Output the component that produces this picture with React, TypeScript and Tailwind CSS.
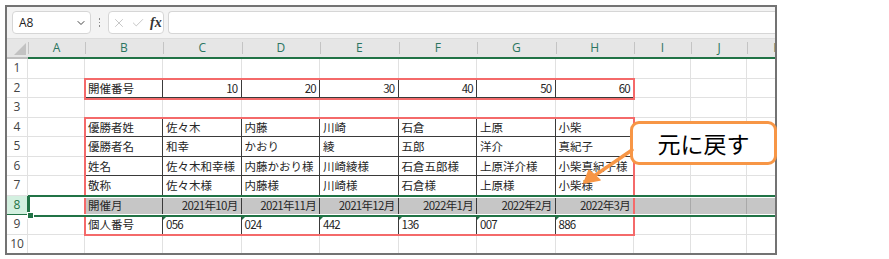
import { ChevronDown, X, Check } from "lucide-react";

type Cell = { t: string; align?: "l" | "r"; flag?: boolean };

const COLS = ["A", "B", "C", "D", "E", "F", "G", "H", "I", "J", "K"];

const l = (t: string): Cell => ({ t, align: "l" });
const r = (t: string): Cell => ({ t, align: "r" });
const f = (t: string): Cell => ({ t, align: "l", flag: true });

// rows 1..10, columns A..K
const ROWS: Record<number, Cell[]> = {
  2: [l(""), l("開催番号"), r("10"), r("20"), r("30"), r("40"), r("50"), r("60")],
  4: [l(""), l("優勝者姓"), l("佐々木"), l("内藤"), l("川崎"), l("石倉"), l("上原"), l("小柴")],
  5: [l(""), l("優勝者名"), l("和幸"), l("かおり"), l("綾"), l("五郎"), l("洋介"), l("真紀子")],
  6: [l(""), l("姓名"), l("佐々木和幸様"), l("内藤かおり様"), l("川崎綾様"), l("石倉五郎様"), l("上原洋介様"), l("小柴真紀子様")],
  7: [l(""), l("敬称"), l("佐々木様"), l("内藤様"), l("川崎様"), l("石倉様"), l("上原様"), l("小柴様")],
  8: [l(""), l("開催月"), r("2021年10月"), r("2021年11月"), r("2021年12月"), r("2022年1月"), r("2022年2月"), r("2022年3月")],
  9: [l(""), l("個人番号"), f("056"), f("024"), f("442"), f("136"), f("007"), f("886")],
};

const TABLE_ROWS = [2, 4, 5, 6, 7, 8, 9];

function GridCell({ row, col }: { row: number; col: number }) {
  const cell = ROWS[row]?.[col];
  const inTable = TABLE_ROWS.includes(row) && col >= 1 && col <= 7;
  const selected = row === 8 && col >= 1;
  const border = inTable
    ? "border-[#3a3a3a]"
    : selected
      ? "border-[#a9a9a9]"
      : "border-[#e1e1e1]";
  const numeric = cell && /^[0-9]/.test(cell.t);

  return (
    <div
      className={`relative flex h-[19.5px] items-center overflow-visible whitespace-nowrap border-r border-b px-[3px] pt-[1px] text-[11.5px] leading-none text-[#262626] ${border} ${
        selected ? "bg-[#c6c6c6]" : "bg-white"
      } ${cell?.align === "r" ? "justify-end" : "justify-start"} ${
        numeric ? "tracking-[-0.7px]" : ""
      }`}
    >
      {cell?.flag && (
        <span className="absolute top-0 left-0 h-0 w-0 border-t-[5px] border-r-[5px] border-t-[#1e7145] border-r-transparent" />
      )}
      {cell?.t}
    </div>
  );
}

export default function App() {
  const rows = Array.from({ length: 10 }, (_, i) => i + 1);

  return (
    <div
      className="relative h-[259px] w-[889px] overflow-hidden bg-white"
      style={{ fontFamily: '"Noto Sans CJK JP", "Noto Sans", sans-serif' }}
    >
      <div className="ml-[5px] pt-[5px]">
        <div className="relative h-[250px] w-[772px] overflow-hidden border-2 border-[#737373]">
          {/* formula bar */}
          <div className="flex h-[32px] items-start border-b border-[#dcdcdc] bg-[#f3f3f3] pt-[4px] pl-[5px]">
            <div className="flex h-[23px] w-[79px] items-center justify-between rounded-[4px] border border-[#d6d6d6] bg-white pr-[3px] pl-[6px]">
              <span className="font-['Open_Sans',sans-serif] text-[12px] text-[#222]">A8</span>
              <ChevronDown className="h-[12px] w-[12px] text-[#444]" strokeWidth={2} />
            </div>
            <div className="flex h-[23px] w-[17px] items-center justify-center">
              <span className="flex flex-col gap-[2px]">
                <span className="h-[1.5px] w-[1.5px] bg-[#8a8a8a]" />
                <span className="h-[1.5px] w-[1.5px] bg-[#8a8a8a]" />
                <span className="h-[1.5px] w-[1.5px] bg-[#8a8a8a]" />
              </span>
            </div>
            <div className="flex h-[23px] w-[56px] items-center gap-[5px] rounded-[4px] border border-[#d6d6d6] bg-white pl-[3px]">
              <X className="h-[14px] w-[14px] text-[#b5b5b5]" strokeWidth={1.3} />
              <Check className="h-[14px] w-[14px] text-[#b5b5b5]" strokeWidth={1.3} />
              <span className="font-['Liberation_Serif',serif] text-[14px] leading-none font-bold text-[#333] italic">
                fx
              </span>
            </div>
            <div className="ml-[4px] h-[23px] flex-1 rounded-l-[4px] border border-r-0 border-[#d6d6d6] bg-white" />
          </div>

          {/* sheet grid */}
          <div className="grid grid-cols-[21px_57px_78px_repeat(6,78.5px)_57px_56px_60px]">
            {/* corner */}
            <div className="relative h-[20px] border-b-2 border-[#bfbfbf] bg-[#e6e6e6]">
              <svg className="absolute right-[2px] bottom-[2px]" width="12" height="12" viewBox="0 0 12 12">
                <polygon points="12,0 12,12 0,12" fill="#c2c2c2" />
              </svg>
            </div>
            {COLS.map((c) => (
              <div
                key={c}
                className="relative flex h-[20px] items-center justify-center border-b-2 border-[#217346] bg-[#e6e6e6] font-['Open_Sans',sans-serif] text-[12px] text-[#2a7560]"
              >
                <span className="absolute top-[3px] bottom-[3px] left-0 w-px bg-[#c4c4c4]" />
                {c}
              </div>
            ))}

            {rows.map((row) => (
              <div key={row} className="contents">
                <div
                  className={`flex h-[19.5px] items-center justify-center border-r border-b font-['Open_Sans',sans-serif] text-[12px] ${
                    row === 8
                      ? "border-[#217346] bg-[#d3f0e0] text-[#217346]"
                      : "border-[#e1e1e1] bg-white text-[#444]"
                  }`}
                >
                  {row}
                </div>
                {COLS.map((c, ci) => (
                  <GridCell key={c} row={row} col={ci} />
                ))}
              </div>
            ))}
          </div>

          {/* red boxes */}
          <div className="absolute top-[71px] left-[77px] h-[22px] w-[551px] border-2 border-[#f46a6a]" />
          <div className="absolute top-[110px] left-[77px] h-[119px] w-[551px] border-2 border-[#f46a6a]" />

          {/* row 8 selection */}
          <div className="absolute top-[188px] left-[21px] h-[22px] w-[760px] border-2 border-[#217346] shadow-[inset_0_0_0_1px_#ffffff]" />
          <div className="absolute top-[206px] left-[21px] h-[5px] w-[5px] bg-[#217346] ring-1 ring-white" />
        </div>
      </div>

      {/* callout */}
      <div className="absolute top-[121px] left-[630px] flex h-[44px] w-[147px] items-center justify-center rounded-[9px] border-[3px] border-[#f79646] bg-white text-[23px] leading-none text-black">
        元に戻す
      </div>
      <svg className="absolute top-0 left-0" width="889" height="259" viewBox="0 0 889 259">
        <line x1="632" y1="150" x2="594" y2="176" stroke="#f79646" strokeWidth="3.5" strokeLinecap="round" />
        <polygon points="584,183 589,170 600,180" fill="#f79646" stroke="#f79646" strokeWidth="1.5" strokeLinejoin="round" />
      </svg>
    </div>
  );
}
